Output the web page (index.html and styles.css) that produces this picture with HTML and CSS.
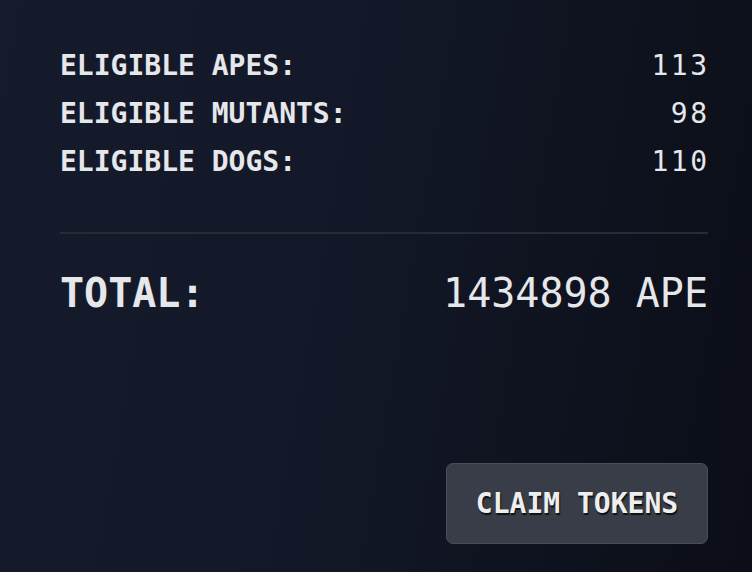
FILE: index.html
```html
<!DOCTYPE html>
<html>
<head>
<meta charset="utf-8">
<link rel="stylesheet" href="styles.css">
</head>
<body>
<main class="panel">
  <section class="counts">
    <div class="row"><span class="label">ELIGIBLE APES:</span><span class="value">113</span></div>
    <div class="row"><span class="label">ELIGIBLE MUTANTS:</span><span class="value">98</span></div>
    <div class="row"><span class="label">ELIGIBLE DOGS:</span><span class="value">110</span></div>
  </section>
  <hr class="divider">
  <div class="total"><span class="total-label">TOTAL:</span><span class="total-value">1434898 APE</span></div>
  <div class="actions"><button class="claim">CLAIM TOKENS</button></div>
</main>
</body>
</html>
```

FILE: styles.css
```css
html, body {
  margin: 0;
  height: 100%;
}
body {
  background: linear-gradient(100deg, #161b2b 0%, #131828 45%, #0b0e17 100%);
  color: #e6e7ea;
  font-family: "DejaVu Sans Mono", "Liberation Mono", monospace;
}
.panel {
  box-sizing: border-box;
  padding: 42px 44px 0 60px;
  height: 572px;
  display: flex;
  flex-direction: column;
}
.counts {
  display: flex;
  flex-direction: column;
}
.row {
  display: flex;
  justify-content: space-between;
  font-size: 28px;
  line-height: 48px;
}
.label {
  font-weight: bold;
}
.value {
  font-weight: normal;
  letter-spacing: 2.5px;
  margin-right: -1.5px;
}
.divider {
  border: 0;
  height: 2px;
  background: #262b38;
  margin: 46px 0 35px 0;
}
.total {
  display: flex;
  justify-content: space-between;
  font-size: 40px;
  line-height: 48px;
}
.total-label {
  font-weight: bold;
}
.total-value {
  font-weight: normal;
}
.actions {
  display: flex;
  justify-content: flex-end;
  margin-top: 146px;
}
.claim {
  box-sizing: border-box;
  width: 262px;
  height: 81px;
  background: #393d48;
  border: 1px solid #4a4e59;
  border-radius: 7px;
  color: #eeeeef;
  font-family: "DejaVu Sans Mono", "Liberation Mono", monospace;
  font-weight: bold;
  font-size: 28px;
  text-shadow: 1px 2px 1px #111;
  padding: 0;
}
```
